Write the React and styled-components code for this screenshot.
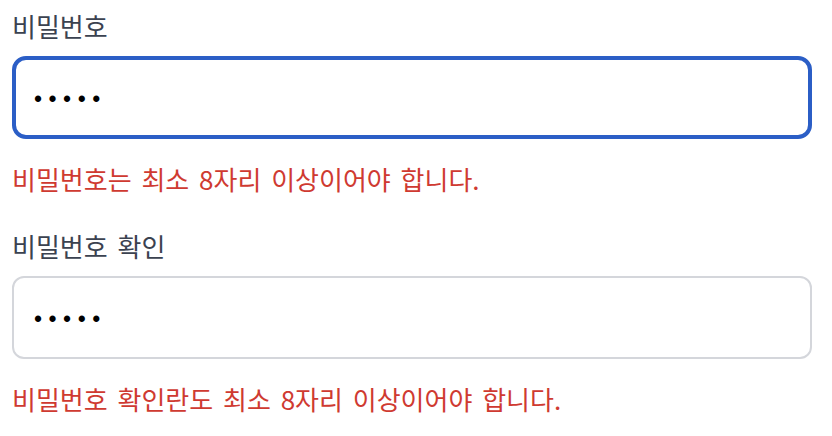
import styled, { createGlobalStyle } from 'styled-components';

const GlobalStyle = createGlobalStyle`
  html, body {
    margin: 0;
    padding: 0;
    background: #ffffff;
  }
  body {
    font-family: 'Noto Sans CJK KR', 'Noto Sans', sans-serif;
  }
`;

const Form = styled.form`
  width: 800px;
  padding: 6px 12px 0;
  display: flex;
  flex-direction: column;
  gap: 27px;
`;

const Field = styled.div`
  display: flex;
  flex-direction: column;
`;

const Label = styled.label`
  font-size: 26px;
  line-height: 40px;
  word-spacing: 4px;
  color: #3b4250;
  margin-bottom: 10px;
`;

const Input = styled.input`
  box-sizing: border-box;
  width: 800px;
  height: 83px;
  padding: 4px ${({ $focused }) => ($focused ? 18 : 20)}px 0;
  border: ${({ $focused }) => ($focused ? '4px solid #2b5ec6' : '2px solid #d4d6db')};
  border-radius: ${({ $focused }) => ($focused ? 14 : 12)}px;
  font-family: 'Liberation Sans', sans-serif;
  font-size: 23px;
  letter-spacing: 6.5px;
  color: #000000;
  background: #ffffff;
  outline: none;
`;

const ErrorText = styled.p`
  margin: 20px 0 0;
  font-size: 26px;
  line-height: 40px;
  word-spacing: 4px;
  color: #cf3a31;
`;

const PasswordField = ({ id, label, error, focused }) => (
  <Field>
    <Label htmlFor={id}>{label}</Label>
    <Input id={id} type="password" value="12345" readOnly $focused={focused} />
    <ErrorText>{error}</ErrorText>
  </Field>
);

export default function App() {
  return (
    <>
      <GlobalStyle />
      <Form onSubmit={(e) => e.preventDefault()}>
        <PasswordField
          id="password"
          label="비밀번호"
          error="비밀번호는 최소 8자리 이상이어야 합니다."
          focused
        />
        <PasswordField
          id="passwordConfirm"
          label="비밀번호 확인"
          error="비밀번호 확인란도 최소 8자리 이상이어야 합니다."
        />
      </Form>
    </>
  );
}
